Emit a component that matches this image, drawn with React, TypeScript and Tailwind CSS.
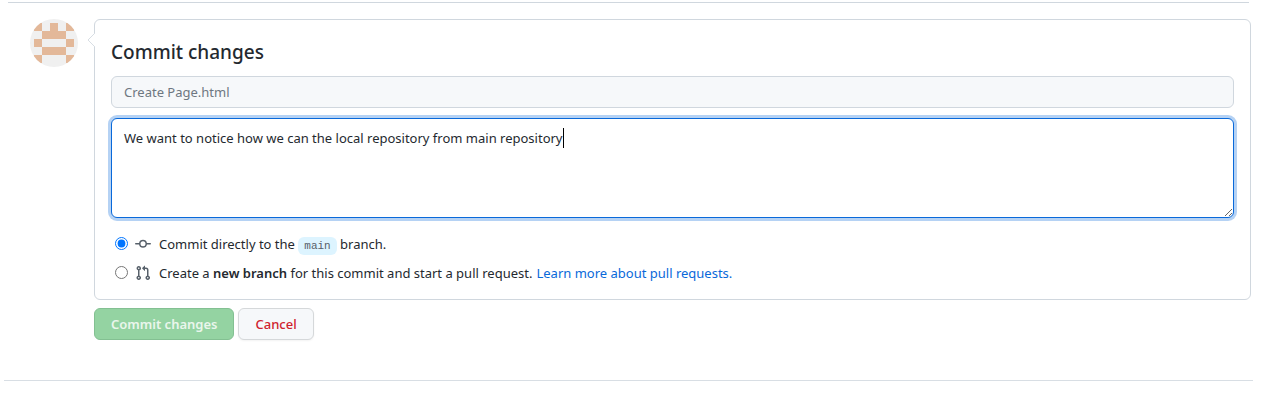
import { useState } from "react";

const avatarCells = [
  [0, 0], [2, 0], [4, 0],
  [1, 1], [2, 1], [3, 1],
  [0, 2], [4, 2],
  [1, 3], [2, 3], [3, 3],
  [0, 4], [4, 4],
];

function Avatar() {
  return (
    <svg viewBox="0 0 48 48" className="size-12 shrink-0 rounded-full bg-[#f0f0f0]" role="img" aria-label="User avatar">
      {avatarCells.map(([column, row]) => (
        <rect key={`${column}-${row}`} x={4 + column * 8} y={4 + row * 8} width="8" height="8" fill="#e3b899" />
      ))}
    </svg>
  );
}

function CommitIcon() {
  return (
    <svg viewBox="0 0 16 16" className="size-4 shrink-0 fill-[#57606a]" aria-hidden="true">
      <path fillRule="evenodd" d="M10.5 7.75a2.5 2.5 0 11-5 0 2.5 2.5 0 015 0zm1.43.75a4.002 4.002 0 01-7.86 0H.75a.75.75 0 110-1.5h3.32a4.001 4.001 0 017.86 0h3.32a.75.75 0 110 1.5h-3.32z" />
    </svg>
  );
}

function PullRequestIcon() {
  return (
    <svg viewBox="0 0 16 16" className="size-4 shrink-0 fill-[#57606a]" aria-hidden="true">
      <path fillRule="evenodd" d="M7.177 3.073L9.573.677A.25.25 0 0110 .854v4.792a.25.25 0 01-.427.177L7.177 3.427a.25.25 0 010-.354zM3.75 2.5a.75.75 0 100 1.5.75.75 0 000-1.5zm-2.25.75a2.25 2.25 0 113 2.122v5.256a2.251 2.251 0 11-1.5 0V5.372A2.25 2.25 0 011.5 3.25zM11 2.5h-1V4h1a1 1 0 011 1v5.628a2.251 2.251 0 101.5 0V5A2.5 2.5 0 0011 2.5zm1 10.25a.75.75 0 111.5 0 .75.75 0 01-1.5 0zM3.75 12a.75.75 0 100 1.5.75.75 0 000-1.5z" />
    </svg>
  );
}

export default function App() {
  const [summary, setSummary] = useState("");
  const [description, setDescription] = useState(
    "We want to notice how we can the local repository from main repository"
  );
  const [target, setTarget] = useState("direct");

  return (
    <main className="bg-white pt-0.5 font-['Noto_Sans','Open_Sans',sans-serif] text-[13px] leading-5 text-[#24292f]">
      <hr className="ml-2 mr-9 border-[#d0d7de]" />
      <form className="ml-[30px] mr-[34px] mt-4 flex gap-4" onSubmit={(event) => event.preventDefault()}>
        <Avatar />
        <div className="min-w-0 flex-1">
          <section className="relative rounded-md border border-[#d0d7de] px-4 pb-4 pt-5">
            <svg viewBox="0 0 8 16" className="absolute -left-2 top-3 h-4 w-2" aria-hidden="true">
              <path d="M8 1L1 8l7 7" fill="#fff" stroke="#d8dee4" />
            </svg>
            <h1 className="text-[19px] font-medium leading-6">Commit changes</h1>
            <input
              aria-label="Commit summary"
              placeholder="Create Page.html"
              value={summary}
              onChange={(event) => setSummary(event.target.value)}
              className="mt-3 block h-8 w-full rounded-md border border-[#d0d7de] bg-[#f6f8fa] px-3 outline-none placeholder:text-[#6e7781]"
            />
            <div className="relative mt-2.5">
              <textarea
                aria-label="Extended description"
                value={description}
                onChange={(event) => setDescription(event.target.value)}
                className="block h-[100px] w-full resize-y rounded-md border border-[#0969da] bg-white px-3 py-[9px] caret-transparent outline-none ring-3 ring-[#b5d2f4]"
              />
              <span className="absolute left-[452px] top-2.5 h-5 w-px bg-black" aria-hidden="true" />
            </div>
            <div className="mt-4 flex flex-col gap-[9px] pl-1">
              <div className="flex h-5 items-center">
                <input id="direct" type="radio" name="target" checked={target === "direct"} onChange={() => setTarget("direct")} className="mb-0.5 size-[13px]" />
                <label htmlFor="direct" className="ml-[7px] flex items-center gap-2">
                  <CommitIcon />
                  <span>
                    Commit directly to the{" "}
                    <code className="rounded-md bg-[#ddf4ff] px-1.5 py-[3px] font-['Liberation_Mono',monospace] text-[11px] leading-none text-[#57606a]">main</code>{" "}
                    branch.
                  </span>
                </label>
              </div>
              <div className="flex h-5 items-center">
                <input id="branch" type="radio" name="target" checked={target === "branch"} onChange={() => setTarget("branch")} className="mb-0.5 size-[13px]" />
                <label htmlFor="branch" className="ml-[7px] flex items-center gap-2">
                  <PullRequestIcon />
                  <span>
                    Create a <strong className="font-semibold">new branch</strong> for this commit and start a pull request.
                  </span>
                </label>
                <a href="#pull-requests" className="ml-1 text-[#0969da]">Learn more about pull requests.</a>
              </div>
            </div>
          </section>
          <div className="mt-2 flex gap-1">
            <button type="submit" disabled className="h-8 rounded-md border border-[#83c092] bg-[#94d3a2] px-4 font-semibold text-[#eaf6ec]">
              Commit changes
            </button>
            <button type="button" className="h-8 rounded-md border border-[#d5d8da] bg-[#f6f8fa] px-4 font-medium text-[#cf222e] shadow-xs">
              Cancel
            </button>
          </div>
        </div>
      </form>
      <hr className="ml-1 mr-8 mt-10 border-[#d8dee4]" />
    </main>
  );
}
